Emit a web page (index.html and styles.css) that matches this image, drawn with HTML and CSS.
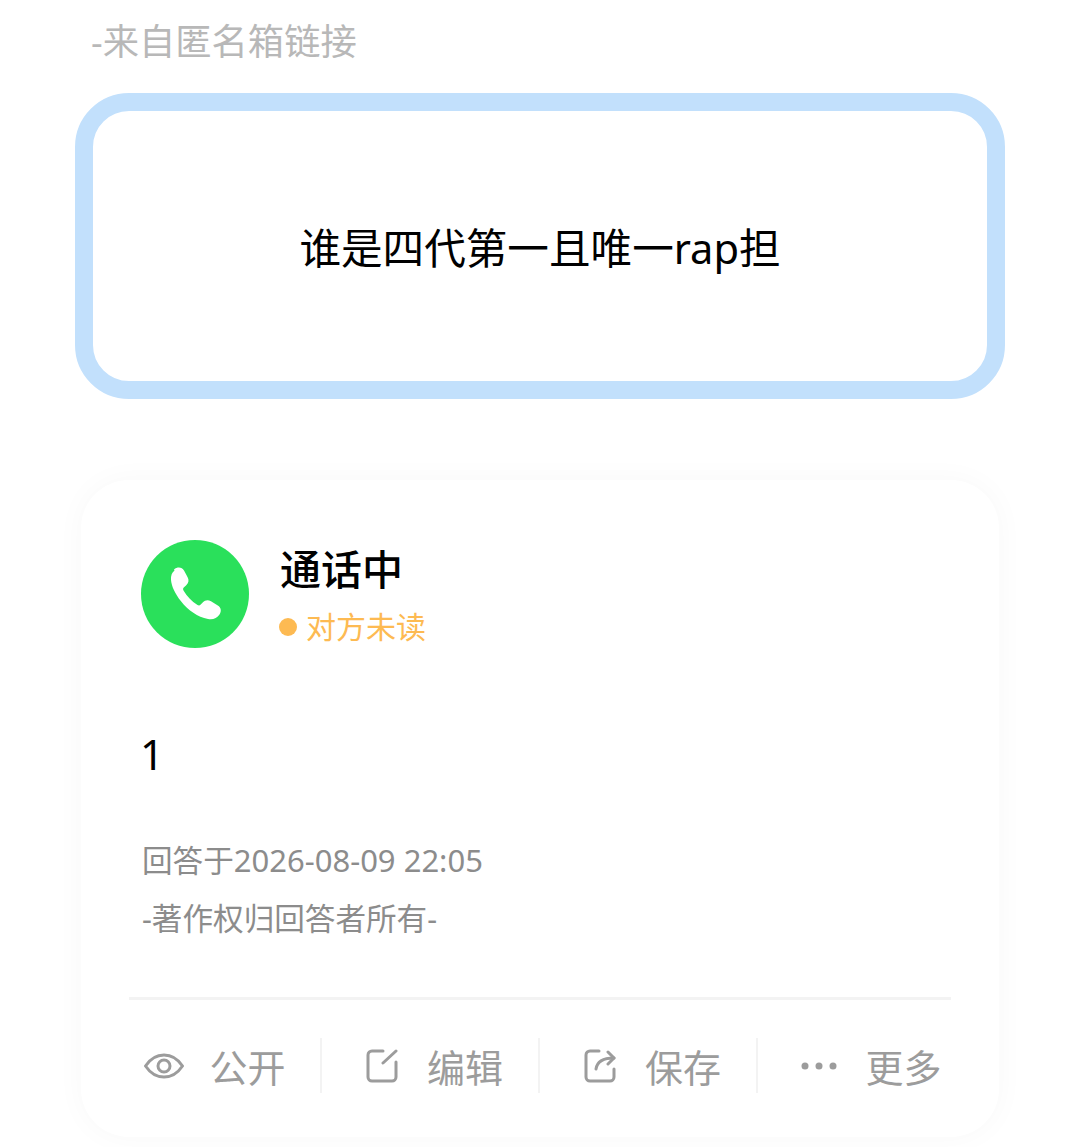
FILE: index.html
```html
<!DOCTYPE html>
<html lang="zh-CN">
<head>
<meta charset="utf-8">
<title>通话中</title>
<link rel="stylesheet" href="styles.css">
</head>
<body>
<div class="source">-来自匿名箱链接</div>
<div class="question">谁是四代第一且唯一rap担</div>
<div class="card">
  <div class="head">
    <div class="avatar">
      <svg viewBox="0 0 108 108" class="phone"><path d="M33 29.500c3.500-3 8-2.500 10 1l3.500 6.500c1.800 3.300 1.200 6-1.500 8.500l-2 1.800c-1 1-1.200 2-.5 3.200 3.500 6 8 10.800 14 14.500 1.200.7 2.200.6 3.200-.4l2-2.100c2.500-2.600 5.300-3 8.300-1.200l6.800 4.200c3.300 2 3.900 5.600 1.700 9-2.500 3.900-6.800 5.500-11.500 4.500-10.500-2.300-19.500-8.300-27-17.800-6-7.600-9.500-15-10-21.500-.3-3.900 1-7.300 3.500-9.200z" fill="#fff"/></svg>
    </div>
    <div class="meta">
      <div class="name">通话中</div>
      <div class="status"><span class="dot"></span>对方未读</div>
    </div>
  </div>
  <div class="answer">1</div>
  <div class="info time">回答于<span class="stamp">2026-08-09 22:05</span></div>
  <div class="info rights">-著作权归回答者所有-</div>
  <div class="actions">
    <div class="action">
      <svg class="icon eye" viewBox="0 0 40 26"><path d="M1.500 13C6.500 5.500 12.500 2 20 2s13.500 3.500 18.500 11C33.500 20.500 27.500 24 20 24S6.500 20.500 1.500 13z"/><circle cx="20" cy="13" r="6"/></svg>
      <span>公开</span>
    </div>
    <div class="action">
      <svg class="icon" viewBox="0 0 32 34"><path d="M17 2H6a4 4 0 0 0-4 4v22a4 4 0 0 0 4 4h20a4 4 0 0 0 4-4V13"/><path d="M17 14 30 2"/></svg>
      <span>编辑</span>
    </div>
    <div class="action">
      <svg class="icon" viewBox="0 0 32 34"><path d="M15 2H6a4 4 0 0 0-4 4v22a4 4 0 0 0 4 4h20a4 4 0 0 0 4-4V20"/><path d="M12 20c1-7 6-11 18-11"/><path d="M24 3l6 6-6 6"/></svg>
      <span>保存</span>
    </div>
    <div class="action">
      <svg class="icon dots" viewBox="0 0 36 8"><circle cx="4" cy="4" r="3.500"/><circle cx="18" cy="4" r="3.500"/><circle cx="32" cy="4" r="3.500"/></svg>
      <span>更多</span>
    </div>
  </div>
</div>
</body>
</html>
```
FILE: styles.css
```css
html, body { margin: 0; padding: 0; }
body {
  width: 1080px;
  height: 1147px;
  overflow: hidden;
  background: #fff;
  font-family: "Noto Sans", "Noto Sans CJK SC", sans-serif;
  color: #000;
}
.source {
  margin-left: 91px;
  height: 93px;
  padding-top: 19px;
  box-sizing: border-box;
  font-size: 36.300px;
  line-height: 44px;
  color: #b8b8b8;
}
.question {
  margin-left: 75px;
  width: 930px;
  height: 306px;
  box-sizing: border-box;
  border: 18px solid #c2e0fc;
  border-radius: 54px;
  display: flex;
  align-items: center;
  justify-content: center;
  font-size: 41.600px;
  line-height: 54px;
  padding-top: 4px;
}
.card {
  margin: 81px 0 0 81px;
  width: 918px;
  height: 657px;
  box-sizing: border-box;
  padding: 60px 48px 0;
  border-radius: 48px;
  background: #fff;
  box-shadow: 0 0 30px rgba(0, 0, 0, 0.03);
}
.head {
  display: flex;
  align-items: center;
  padding-left: 12px;
  height: 108px;
}
.avatar {
  width: 108px;
  height: 108px;
  border-radius: 50%;
  background: #2ae05b;
  display: flex;
  align-items: center;
  justify-content: center;
}
.phone { width: 108px; height: 108px; }
.meta { margin-left: 31px; padding-top: 4px; }
.name {
  font-size: 41px;
  line-height: 56px;
  font-weight: 500;
  margin-top: -4px;
}
.status {
  display: flex;
  align-items: center;
  font-size: 30px;
  line-height: 40px;
  color: #fdba52;
  margin-top: 10px;
}
.dot {
  width: 18px;
  height: 18px;
  border-radius: 50%;
  background: #fdba52;
  margin-right: 9px;
  margin-left: -1px;
}
.answer {
  margin: 79px 0 0 11px;
  font-size: 42px;
  line-height: 54px;
}
.info {
  margin-left: 13px;
  font-size: 30.600px;
  line-height: 40px;
  color: #8c8c8c;
}
.stamp { font-size: 31px; }
.time { margin-top: 59px; }
.rights { margin-top: 18px; }
.actions {
  margin: 59px -27px 0 -25px;
  position: relative;
  display: grid;
  grid-template-columns: repeat(4, 218px);
  padding-top: 41px;
}
.actions::before {
  content: "";
  position: absolute;
  top: 0;
  left: 25px;
  width: 822px;
  height: 3px;
  background: #f3f3f3;
}
.action {
  height: 55px;
  padding-left: 9px;
  box-sizing: border-box;
  display: flex;
  align-items: center;
  justify-content: center;
  gap: 29px;
  font-size: 38px;
  color: #9c9c9c;
  border-right: 2px solid #f3f3f3;
}
.action:first-child { gap: 25px; padding-left: 6px; }
.action:last-child { gap: 28px; border-right: 0; }
.icon {
  width: 32px;
  height: 34px;
  fill: none;
  stroke: #9c9c9c;
  stroke-width: 3;
  stroke-linecap: round;
  stroke-linejoin: round;
}
.icon.eye { width: 40px; height: 26px; }
.icon.dots { width: 36px; height: 8px; fill: #9c9c9c; stroke: none; }
```
